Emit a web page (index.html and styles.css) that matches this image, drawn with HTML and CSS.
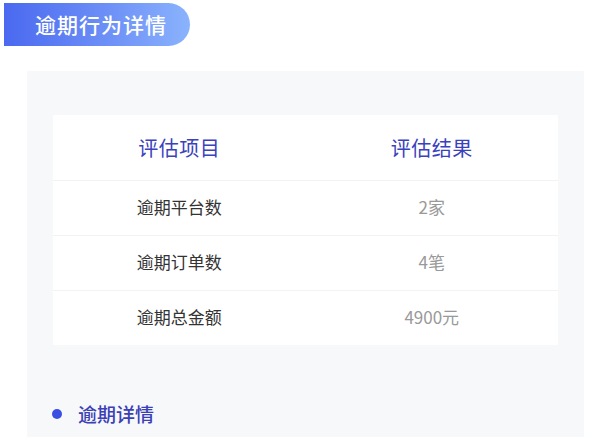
FILE: index.html
```html
<!DOCTYPE html>
<html lang="zh-CN">
<head>
<meta charset="utf-8">
<title>逾期行为详情</title>
<link rel="stylesheet" href="styles.css">
</head>
<body>
<div class="page">
  <div class="title-pill">逾期行为详情</div>
  <div class="panel">
    <div class="table">
      <div class="row head">
        <div class="cell">评估项目</div>
        <div class="cell">评估结果</div>
      </div>
      <div class="row">
        <div class="cell label">逾期平台数</div>
        <div class="cell value">2家</div>
      </div>
      <div class="row">
        <div class="cell label">逾期订单数</div>
        <div class="cell value">4笔</div>
      </div>
      <div class="row">
        <div class="cell label">逾期总金额</div>
        <div class="cell value">4900元</div>
      </div>
    </div>
    <div class="section-title">
      <span class="dot"></span>
      <span class="section-text">逾期详情</span>
    </div>
  </div>
</div>
</body>
</html>
```
FILE: styles.css
```css
* { box-sizing: border-box; }
html, body {
  margin: 0;
  padding: 0;
  background: #ffffff;
}
body {
  font-family: "Noto Sans CJK SC", "Noto Sans", sans-serif;
  overflow: hidden;
}
.page {
  padding-top: 3px;
}
.title-pill {
  margin-left: 4px;
  width: 186px;
  height: 43px;
  border-radius: 0 22px 22px 0;
  background: linear-gradient(90deg, #4a69f0 0%, #6f93f7 60%, #8ab3fd 100%);
  color: #ffffff;
  font-size: 21px;
  font-weight: 500;
  line-height: 43px;
  padding-left: 31px;
  letter-spacing: 1px;
}
.panel {
  margin-top: 25px;
  margin-left: 27px;
  width: 557px;
  height: 366px;
  background: #f7f8fa;
  padding: 44px 26px 0 26px;
}
.table {
  background: #ffffff;
  display: flex;
  flex-direction: column;
}
.row {
  display: grid;
  grid-template-columns: 1fr 1fr;
  height: 55px;
  align-items: center;
  border-top: 1px solid #f2f3f5;
}
.row.head {
  height: 65px;
  border-top: none;
}
.cell {
  text-align: center;
}
.head .cell {
  font-size: 20px;
  color: #3a41bd;
  font-weight: 400;
  letter-spacing: 0.5px;
}
.label {
  font-size: 17px;
  color: #333333;
  font-weight: 400;
  padding-bottom: 3px;
}
.value {
  font-size: 17px;
  color: #999999;
  padding-bottom: 3px;
}
.section-title {
  display: flex;
  align-items: center;
  margin-top: 55px;
}
.dot {
  width: 10px;
  height: 10px;
  border-radius: 50%;
  background: #3a4ee3;
  margin-left: -1px;
  margin-right: 16px;
}
.section-text {
  font-size: 19px;
  color: #3a40b6;
  font-weight: 500;
}
```
